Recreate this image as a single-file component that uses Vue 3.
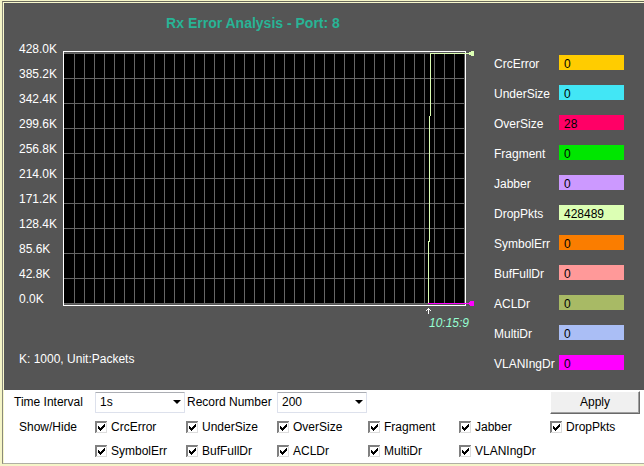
<script setup>
import { ref, reactive, computed } from 'vue'

const axis = ['428.0K', '385.2K', '342.4K', '299.6K', '256.8K', '214.0K', '171.2K', '128.4K', '85.6K', '42.8K', '0.0K']
const counters = [
  { name: 'CrcError', value: 0, color: '#ffcc00' },
  { name: 'UnderSize', value: 0, color: '#42e6f5' },
  { name: 'OverSize', value: 28, color: '#ff0066' },
  { name: 'Fragment', value: 0, color: '#00e600' },
  { name: 'Jabber', value: 0, color: '#cc99ff' },
  { name: 'DropPkts', value: 428489, color: '#dcffb4' },
  { name: 'SymbolErr', value: 0, color: '#fa7d00' },
  { name: 'BufFullDr', value: 0, color: '#ff9999' },
  { name: 'ACLDr', value: 0, color: '#a8ba65' },
  { name: 'MultiDr', value: 0, color: '#aabef5' },
  { name: 'VLANIngDr', value: 0, color: '#ff00ff' }
]
const rows = [counters.slice(0, 6), counters.slice(6)]
const shown = reactive(Object.fromEntries(counters.map((c) => [c.name, true])))
const interval = ref('1s')
const records = ref('200')

const gridPath = computed(() => {
  let d = ''
  for (let x = 11; x <= 391; x += 10) d += `M${x} 2h1v251h-1z`
  for (let y = 2; y <= 252; y += 25) d += `M1 ${y}h400v1h-400z`
  return d
})
</script>

<template>
  <main class="frame">
    <section class="monitor">
      <div class="chart">
        <h1>Rx Error Analysis - Port: 8</h1>
        <div class="plot">
          <ol class="axis">
            <li v-for="tick in axis" :key="tick">{{ tick }}</li>
          </ol>
          <div class="canvas">
            <svg width="412" height="264" viewBox="0 0 412 264" shape-rendering="crispEdges" role="img" aria-label="Error history">
              <rect x="0" y="0" width="403" height="255" fill="#fff" />
              <rect x="1" y="1" width="401" height="253" fill="#555" />
              <rect x="1" y="2" width="400" height="251" fill="#000" />
              <path :d="gridPath" fill="#666" />
              <path v-if="shown.VLANIngDr" d="M365 252h41v1h-41zM406 251h1v3h-1zM407 250h1v5h-1zM408 250h3v5h-3z" fill="#f0f" />
              <path v-if="shown.DropPkts" d="M365 190h1v62h-1zM366 65h1v126h-1zM367 2h1v63h-1zM367 2h39v1h-39zM406 1h2v3h-2zM408 0h3v5h-3z" fill="#dcffb4" />
              <path d="M365 257h1v6h-1zM364 258h3v1h-3zM363 259h1v1h-1zM367 259h1v1h-1z" fill="#fff" />
            </svg>
            <time>10:15:9</time>
          </div>
        </div>
        <p>K: 1000, Unit:Packets</p>
      </div>
      <dl class="legend">
        <div v-for="c in counters" :key="c.name">
          <dt>{{ c.name }}</dt>
          <dd :style="{ backgroundColor: c.color }">{{ c.value }}</dd>
        </div>
      </dl>
    </section>

    <form class="controls" @submit.prevent>
      <div class="row top">
        <label class="first" for="interval">Time Interval</label>
        <div class="picker">
          <select id="interval" v-model="interval">
            <option>1s</option>
          </select>
          <svg width="8" height="4" viewBox="0 0 8 4" aria-hidden="true"><path d="M0 0h8L4 4z" /></svg>
        </div>
        <label class="second" for="records">Record Number</label>
        <div class="picker">
          <select id="records" v-model="records">
            <option>200</option>
          </select>
          <svg width="8" height="4" viewBox="0 0 8 4" aria-hidden="true"><path d="M0 0h8L4 4z" /></svg>
        </div>
        <button type="submit">Apply</button>
      </div>
      <div v-for="(row, i) in rows" :key="i" class="row">
        <span class="heading">{{ i === 0 ? 'Show/Hide' : '' }}</span>
        <label v-for="c in row" :key="c.name" class="check">
          <input v-model="shown[c.name]" type="checkbox" />
          <svg width="12" height="12" viewBox="0 0 12 12" aria-hidden="true" shape-rendering="crispEdges">
            <path d="M0 0h12v12h-12z" fill="#fff" />
            <path d="M0 0h12v1h-11v11h-1z" fill="#808080" />
            <path d="M1 1h10v1h-9v9h-1z" fill="#808080" />
            <path d="M11 1h1v11h-11v-1h10z" fill="#dcdcdc" />
            <path v-if="shown[c.name]" d="M3 5h1v3h-1zM4 6h1v3h-1zM5 7h1v3h-1zM6 6h1v3h-1zM7 5h1v3h-1zM8 4h1v3h-1zM9 3h1v3h-1z" fill="#000" />
          </svg>
          <span>{{ c.name }}</span>
        </label>
      </div>
    </form>
  </main>
</template>

<style>
body {
  margin: 0;
  background: #f5f5c8;
}
</style>

<style scoped>
.frame {
  box-sizing: border-box;
  margin: 1px 0 1px 2px;
  padding: 1px 0 0 1px;
  border: 1px solid #68685c;
  border-right: 0;
  border-bottom-color: #b0b0a4;
  border-left-color: #8a8a7a;
  background: #f8f8cc;
  font: 12px/15px "Liberation Sans", Arial, sans-serif;
  color: #000;
}
.monitor {
  display: flex;
  justify-content: space-between;
  background: #555;
  color: #fff;
}
.chart {
  padding: 12px 0 0 15px;
}
h1 {
  margin: 0;
  padding-left: 12px;
  font-size: 14px;
  line-height: 16px;
  text-align: center;
  color: #28b496;
}
.plot {
  display: flex;
  padding-top: 10px;
}
.axis {
  width: 44px;
  margin: 0;
  padding: 1px 0 0;
  list-style: none;
}
.axis li {
  height: 25px;
}
.canvas {
  padding-top: 10px;
}
.canvas svg {
  display: block;
}
time {
  display: block;
  padding: 1px 6px 0 0;
  text-align: right;
  font-style: italic;
  color: #96ffd2;
}
p {
  margin: 0;
  padding: 21px 0 23px;
}
.legend {
  margin: 0;
  padding: 52px 20px 0 0;
}
.legend div {
  display: flex;
  height: 30px;
}
dt {
  width: 65px;
  padding-top: 2px;
}
dd {
  width: 60px;
  height: 15px;
  margin: 0;
  padding-left: 5px;
  line-height: 19px;
  color: #000;
}
.controls {
  padding-right: 3px;
  background: #fff;
}
.row {
  display: grid;
  grid-template-columns: repeat(7, 1fr);
  align-items: center;
  height: 25px;
}
.top {
  height: 24px;
}
.row:last-child {
  height: 24px;
}
.first {
  padding-left: 10px;
}
.second {
  padding-left: 1px;
  white-space: nowrap;
}
.heading {
  padding: 1px 0 0 15px;
}
.picker {
  display: grid;
  align-items: center;
}
.picker > * {
  grid-area: 1 / 1;
}
.picker svg {
  justify-self: end;
  margin-right: 5px;
  pointer-events: none;
}
select {
  appearance: none;
  box-sizing: border-box;
  width: 90px;
  height: 21px;
  padding: 1px 4px 0;
  border: 1px solid #dde1ec;
  border-top-color: #abadb3;
  border-radius: 1px;
  background: #fff;
  font: inherit;
  color: inherit;
}
button {
  grid-column: 7;
  box-sizing: border-box;
  height: 23px;
  margin-right: 1px;
  padding: 1px 0 0;
  border: 1px solid #fff;
  border-right-color: #696969;
  border-bottom-color: #696969;
  box-shadow: inset -1px -1px #a0a0a0;
  background: #f0f0f0;
  font: inherit;
  color: inherit;
}
.check {
  display: grid;
  grid-template-columns: 12px 1fr;
  column-gap: 4px;
  align-items: center;
}
.check span {
  padding-top: 1px;
}
.check input {
  grid-area: 1 / 1;
  width: 12px;
  height: 12px;
  margin: 0;
  opacity: 0;
}
.check svg {
  grid-area: 1 / 1;
  pointer-events: none;
}
</style>
